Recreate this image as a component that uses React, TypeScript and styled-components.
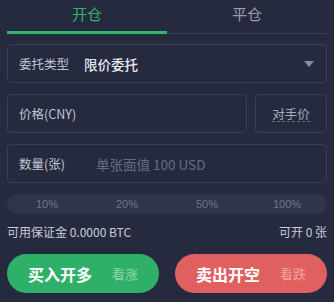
import React from 'react'
import styled, { createGlobalStyle } from 'styled-components'

const GlobalStyle = createGlobalStyle`
  html, body {
    margin: 0;
    padding: 0;
    background: #262a3e;
  }
  body {
    font-family: "Noto Sans CJK SC", "Noto Sans", sans-serif;
  }
`

const Panel = styled.div`
  width: 334px;
  height: 302px;
  box-sizing: border-box;
  padding: 0 7px;
  background: #262a3e;
  color: #c9ccd6;
`

const Tabs = styled.div`
  display: flex;
  border-bottom: 1px solid #3a3f55;
  height: 34px;
  box-sizing: border-box;
`

const Tab = styled.div<{ $active?: boolean }>`
  flex: 1;
  text-align: center;
  font-size: 15px;
  line-height: 28px;
  color: ${p => (p.$active ? '#35b46c' : '#9a9eab')};
  border-bottom: 3px solid ${p => (p.$active ? '#35b46c' : 'transparent')};
  margin-bottom: -1px;
`

const Form = styled.div`
  display: flex;
  flex-direction: column;
  gap: 11px;
  padding-top: 10px;
`

const Row = styled.div`
  display: flex;
  gap: 8px;
`

const Field = styled.div<{ $grow?: boolean }>`
  flex: ${p => (p.$grow ? '1 1 auto' : 'none')};
  height: 39px;
  box-sizing: border-box;
  border: 1px solid #3a3f55;
  border-radius: 4px;
  display: flex;
  align-items: center;
  padding: 0 11px;
`

const Label = styled.span<{ $width?: number }>`
  font-size: 12.5px;
  color: #c3c6d1;
  width: ${p => (p.$width ? `${p.$width}px` : 'auto')};
`

const Value = styled.span`
  font-size: 13.5px;
  font-weight: 500;
  color: #e4e6ee;
  flex: 1;
`

const Placeholder = styled.span`
  font-size: 13.5px;
  color: #686d80;
`

const Caret = styled.span`
  width: 0;
  height: 0;
  border-left: 5px solid transparent;
  border-right: 5px solid transparent;
  border-top: 6px solid #8a8e9c;
  margin-right: 1px;
`

const Counter = styled(Field)`
  width: 72px;
  justify-content: center;
  padding: 0;
`

const Dashed = styled.span`
  font-size: 12.5px;
  color: #a6aab8;
  border-bottom: 1px dashed #6a6f82;
  line-height: 15px;
`

const Percents = styled.div`
  height: 20px;
  border-radius: 10px;
  background: #30354a;
  display: grid;
  grid-template-columns: repeat(4, 1fr);
  align-items: center;
`

const Percent = styled.span`
  text-align: center;
  font-size: 11px;
  color: #70758a;
  font-family: "Liberation Sans", "Noto Sans CJK SC", sans-serif;
`

const Info = styled.div`
  display: flex;
  justify-content: space-between;
  font-size: 12px;
  color: #c9ccd6;
  margin-top: -2px;
`

const Buttons = styled.div`
  display: flex;
  gap: 16px;
  margin-top: 14px;
`

const Action = styled.div<{ $color: string }>`
  flex: 1;
  height: 39px;
  border-radius: 20px;
  background: ${p => p.$color};
  display: flex;
  align-items: center;
  justify-content: center;
  gap: 20px;
`

const Main = styled.span`
  font-size: 16px;
  font-weight: 700;
  color: #ffffff;
`

const Sub = styled.span<{ $color: string }>`
  font-size: 13px;
  color: ${p => p.$color};
`

export default function App() {
  return (
    <>
      <GlobalStyle />
      <Panel>
        <Tabs>
          <Tab $active>开仓</Tab>
          <Tab>平仓</Tab>
        </Tabs>
        <Form>
          <Field>
            <Label $width={65}>委托类型</Label>
            <Value>限价委托</Value>
            <Caret />
          </Field>
          <Row>
            <Field $grow>
              <Label>价格(CNY)</Label>
            </Field>
            <Counter>
              <Dashed>对手价</Dashed>
            </Counter>
          </Row>
          <Field>
            <Label $width={77}>数量(张)</Label>
            <Placeholder>单张面值 100 USD</Placeholder>
          </Field>
          <Percents>
            <Percent>10%</Percent>
            <Percent>20%</Percent>
            <Percent>50%</Percent>
            <Percent>100%</Percent>
          </Percents>
          <Info>
            <span>可用保证金 0.0000 BTC</span>
            <span>可开 0 张</span>
          </Info>
        </Form>
        <Buttons>
          <Action $color="#2fb068">
            <Main>买入开多</Main>
            <Sub $color="#8fd6ad">看涨</Sub>
          </Action>
          <Action $color="#e05f5f">
            <Main>卖出开空</Main>
            <Sub $color="#f1a5a5">看跌</Sub>
          </Action>
        </Buttons>
      </Panel>
    </>
  )
}
